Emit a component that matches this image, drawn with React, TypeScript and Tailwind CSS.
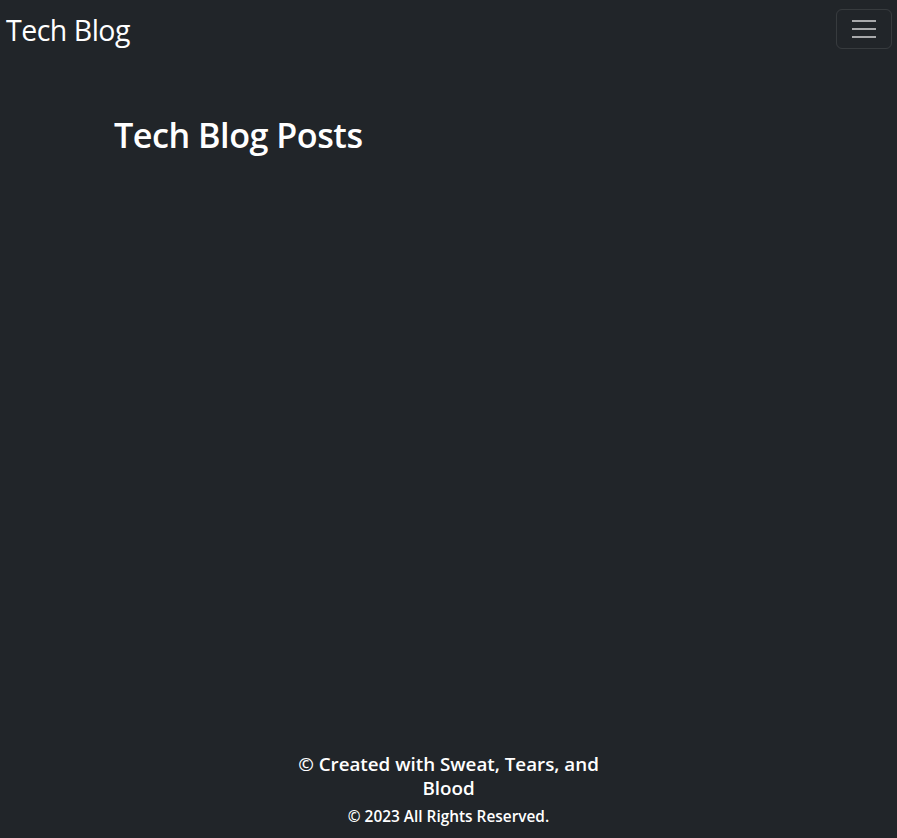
export default function App() {
  return (
    <div
      className="min-h-screen flex flex-col bg-[#212529] text-white"
      style={{ fontFamily: '"Open Sans", "Noto Sans", sans-serif' }}
    >
      {/* Navbar */}
      <nav className="flex items-start justify-between pl-[6px] pr-[5px] pt-[9px] pb-[8px]">
        <a href="#" className="text-[28.5px] leading-[42px] font-normal tracking-[-0.5px]">
          Tech Blog
        </a>
        <button className="w-[56px] h-[40px] border border-white/10 rounded-[6px] flex flex-col items-center justify-center gap-[6px]">
          <span className="block w-[24px] h-[2px] bg-[#a8a9ab]" />
          <span className="block w-[24px] h-[2px] bg-[#a8a9ab]" />
          <span className="block w-[24px] h-[2px] bg-[#a8a9ab]" />
        </button>
      </nav>

      {/* Main */}
      <main className="flex-1 px-[114px] pt-[55px]">
        <h1 className="text-[34.2px] leading-[42px] font-semibold tracking-[-0.5px]">
          Tech Blog Posts
        </h1>
      </main>

      {/* Footer */}
      <footer className="flex flex-col items-center pb-[11px]">
        <p className="w-[310px] text-center text-[18.8px] leading-[24px] font-semibold">
          © Created with Sweat, Tears, and Blood
        </p>
        <p className="mt-[7px] text-[15.4px] leading-[20px] font-semibold">
          © 2023 All Rights Reserved.
        </p>
      </footer>
    </div>
  )
}
